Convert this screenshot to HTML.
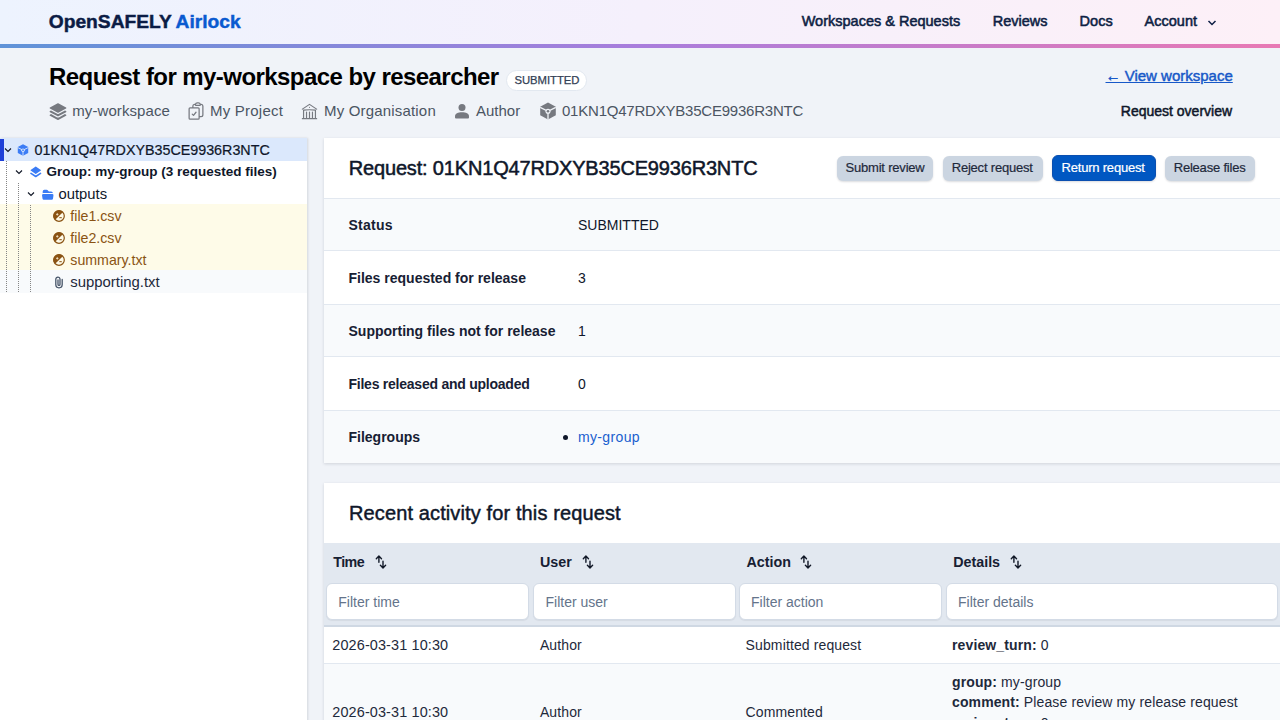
<!DOCTYPE html>
<html><head><meta charset="utf-8">
<style>
*{box-sizing:border-box;margin:0;padding:0}
html,body{width:1280px;height:720px;overflow:hidden}
body{position:relative;background:#f0f3f8;font-family:"Liberation Sans",sans-serif;color:#0f172a}
.a{position:absolute;white-space:nowrap;line-height:1}
#hdr{position:absolute;left:0;top:0;width:1280px;height:44px;background:linear-gradient(90deg,#edf3fe 0%,#f5f0fc 50%,#fdf0f7 100%)}
#hline{position:absolute;left:0;top:44px;width:1280px;height:4px;background:linear-gradient(90deg,#5f93d8 0%,#a97ddc 50%,#e879b4 100%)}
.nav{font-weight:400;font-size:14.5px;color:#0e1f44;-webkit-text-stroke:0.55px #0e1f44}
.meta{font-size:15px;color:#4b5563}
.ico{position:absolute}
#tree{position:absolute;left:0;top:138px;width:307px;height:600px;background:#fff;box-shadow:1px 0 2px rgba(15,23,42,.12)}
.trow{position:absolute;left:0;width:307px;height:22px}
.card{position:absolute;background:#fff;box-shadow:0 1px 3px rgba(15,23,42,.14)}
.lbl{font-weight:700;font-size:14px;color:#172033}
.val{font-size:14px;color:#0f172a}
.btn{position:absolute;height:25px;border-radius:6px;background:#cbd5e1;box-shadow:0 1px 2px rgba(15,23,42,.15)}
.btxt{font-size:13px;color:#1e293b;letter-spacing:-0.2px;-webkit-text-stroke:0.2px currentColor}
.inp{position:absolute;top:582.6px;height:37.2px;background:#fff;border:1px solid #d3dbe6;border-radius:6px;box-shadow:0 1px 1px rgba(15,23,42,.06)}
.ph{font-size:14px;color:#64748b}
.cell{font-size:14px;color:#1e293b;letter-spacing:0.12px}
</style></head><body>
<div id="hdr"></div><div id="hline"></div>
<!-- logo -->
<div class="a" style="left:48.8px;top:12.4px;font-size:19.2px;font-weight:700;color:#0b1c45;-webkit-text-stroke:0.45px #0b1c45">OpenSAFELY</div><div class="a" style="left:175.6px;top:12.4px;font-size:19.2px;font-weight:700;color:#0a5ad0;-webkit-text-stroke:0.45px #0a5ad0">Airlock</div>
<!-- nav -->
<div class="a nav" style="left:801.7px;top:14.3px">Workspaces &amp; Requests</div>
<div class="a nav" style="left:992.7px;top:14.3px">Reviews</div>
<div class="a nav" style="left:1079.6px;top:14.3px">Docs</div>
<div class="a nav" style="left:1144.6px;top:14.3px">Account</div>
<svg class="ico" style="left:1207px;top:19px" width="10" height="8" viewBox="0 0 10 8"><path d="M1.5 2 L5 5.5 L8.5 2" fill="none" stroke="#0e1f44" stroke-width="1.5"/></svg>

<!-- page header -->
<div class="a" style="left:49px;top:64.6px;font-size:24px;font-weight:700;color:#000;letter-spacing:-0.56px">Request for my-workspace by researcher</div>
<div class="a" style="left:505.6px;top:70.2px;width:81.8px;height:21.3px;border:1px solid #e2e8f0;border-radius:11px;background:#fff"></div>
<div class="a" style="left:514.5px;top:75px;font-size:11.3px;color:#334155;-webkit-text-stroke:0.25px #334155;letter-spacing:-0.05px">SUBMITTED</div>

<div class="a" style="left:1105.5px;top:68.4px;font-size:15px;color:#1758c8;text-decoration:underline;text-underline-offset:1px;-webkit-text-stroke:0.45px #1758c8">← View workspace</div>
<div class="a" style="left:1120.8px;top:103.8px;font-size:14px;color:#0f172a;-webkit-text-stroke:0.5px #0f172a">Request overview</div>

<!-- meta row -->
<div class="a meta" style="left:72.3px;top:102.8px;letter-spacing:0.08px">my-workspace</div>
<div class="a meta" style="left:210px;top:102.8px;letter-spacing:0.22px">My Project</div>
<div class="a meta" style="left:324px;top:102.8px;letter-spacing:0.18px">My Organisation</div>
<div class="a meta" style="left:476px;top:102.8px">Author</div>
<div class="a meta" style="left:562px;top:102.8px;letter-spacing:-0.22px">01KN1Q47RDXYB35CE9936R3NTC</div>

<!-- tree -->
<div id="tree">
 <div class="trow" style="top:0;height:22.6px;background:#dbe8fc"></div>
 <div class="a" style="left:0;top:0.5px;width:4px;height:22px;background:#1e40d8"></div>
 <div class="trow" style="top:66.3px;height:65.6px;background:#fefbe8"></div>
 <div class="trow" style="top:131.9px;height:23px;background:#f8fafc"></div>
 <div class="a" style="left:6px;top:23px;width:1px;height:132px;background:repeating-linear-gradient(180deg,#858585 0 1px,transparent 1px 2px)"></div>
 <div class="a" style="left:18px;top:45px;width:1px;height:110px;background:repeating-linear-gradient(180deg,#858585 0 1px,transparent 1px 2px)"></div>
 <div class="a" style="left:30px;top:67px;width:1px;height:88px;background:repeating-linear-gradient(180deg,#858585 0 1px,transparent 1px 2px)"></div>
</div>
<svg class="ico" style="left:3.5px;top:147px" width="8" height="6" viewBox="0 0 8 6"><path d="M1 1.5 L4 4.5 L7 1.5" fill="none" stroke="#111827" stroke-width="1.15"/></svg>
<svg class="ico" style="left:15.2px;top:169px" width="8" height="6" viewBox="0 0 8 6"><path d="M1 1.5 L4 4.5 L7 1.5" fill="none" stroke="#111827" stroke-width="1.15"/></svg>
<svg class="ico" style="left:27px;top:191px" width="8" height="6" viewBox="0 0 8 6"><path d="M1 1.5 L4 4.5 L7 1.5" fill="none" stroke="#111827" stroke-width="1.15"/></svg>
<div class="a" style="left:34.5px;top:142.5px;font-size:14.3px;color:#0f172a;-webkit-text-stroke:0.2px #0f172a">01KN1Q47RDXYB35CE9936R3NTC</div>
<div class="a" style="left:46.5px;top:164.5px;font-size:13.5px;font-weight:700;color:#0f172a">Group: my-group (3 requested files)</div>
<div class="a" style="left:58.5px;top:186.5px;font-size:14.8px;color:#0f172a">outputs</div>
<div class="a" style="left:70.3px;top:208.5px;font-size:14.2px;color:#8a5313">file1.csv</div>
<div class="a" style="left:70.3px;top:230.5px;font-size:14.2px;color:#8a5313">file2.csv</div>
<div class="a" style="left:70.3px;top:252.5px;font-size:14.2px;color:#8a5313">summary.txt</div>
<div class="a" style="left:70.3px;top:274.5px;font-size:14.9px;color:#1e293b">supporting.txt</div>

<!-- card 1 -->
<div class="card" style="left:324px;top:138px;width:970px;height:325px">
 <div class="a" style="left:0;top:60px;width:970px;height:53px;background:#f8fafc;border-top:1px solid #e2e8f0;border-bottom:1px solid #e2e8f0"></div>
 <div class="a" style="left:0;top:166px;width:970px;height:53px;background:#f8fafc;border-top:1px solid #e2e8f0;border-bottom:1px solid #e2e8f0"></div>
 <div class="a" style="left:0;top:272px;width:970px;height:53px;background:#f8fafc;border-top:1px solid #e2e8f0"></div>
</div>
<div class="a" style="left:348.75px;top:158px;font-size:20px;color:#0f172a;-webkit-text-stroke:0.5px #0f172a;letter-spacing:-0.17px">Request: 01KN1Q47RDXYB35CE9936R3NTC</div>
<div class="btn" style="left:836.5px;top:155.5px;width:96.5px"></div>
<div class="a btxt" style="left:845.5px;top:161px">Submit review</div>
<div class="btn" style="left:942.6px;top:155.5px;width:100.4px"></div>
<div class="a btxt" style="left:951.7px;top:161px">Reject request</div>
<div class="btn" style="left:1052px;top:155.2px;width:104px;height:25.8px;background:#0057c2;border:1px solid #0a4fb0"></div>
<div class="a btxt" style="left:1061.5px;top:161px;color:#fff">Return request</div>
<div class="btn" style="left:1164.6px;top:155.5px;width:90.6px"></div>
<div class="a btxt" style="left:1173.7px;top:161px">Release files</div>

<div class="a lbl" style="left:348.5px;top:217.9px;letter-spacing:0.25px">Status</div>
<div class="a val" style="left:578px;top:217.9px">SUBMITTED</div>
<div class="a lbl" style="left:348.5px;top:270.9px">Files requested for release</div>
<div class="a val" style="left:578px;top:270.9px">3</div>
<div class="a lbl" style="left:348.5px;top:323.9px">Supporting files not for release</div>
<div class="a val" style="left:578px;top:323.9px">1</div>
<div class="a lbl" style="left:348.5px;top:376.9px;letter-spacing:-0.24px">Files released and uploaded</div>
<div class="a val" style="left:578px;top:376.9px">0</div>
<div class="a lbl" style="left:348.5px;top:429.9px">Filegroups</div>
<div class="a" style="left:563px;top:435px;width:5px;height:5px;border-radius:50%;background:#0f172a"></div>
<div class="a val" style="left:578px;top:429.9px;color:#1a5fcf;letter-spacing:0.35px">my-group</div>

<!-- card 2 -->
<div class="card" style="left:324px;top:483px;width:970px;height:300px">
 <div class="a" style="left:0;top:60px;width:970px;height:84px;background:#e2e8f0;border-bottom:2px solid #cfd8e3"></div>
 <div class="a" style="left:0;top:180px;width:970px;height:120px;background:#f8fafc;border-top:1px solid #e2e8f0"></div>
</div>
<div class="a" style="left:349px;top:503px;font-size:20px;color:#0f172a;-webkit-text-stroke:0.45px #0f172a;letter-spacing:0.12px">Recent activity for this request</div>
<div class="a lbl" style="left:333.3px;top:554.6px;font-size:14.3px;letter-spacing:-0.6px">Time</div>
<div class="a lbl" style="left:540px;top:554.6px;font-size:14.3px">User</div>
<div class="a lbl" style="left:746.5px;top:554.6px;font-size:14.3px">Action</div>
<div class="a lbl" style="left:953.2px;top:554.6px;font-size:14.3px">Details</div>
<div class="inp" style="left:325.5px;width:203.5px"></div>
<div class="inp" style="left:532.5px;width:203px"></div>
<div class="inp" style="left:738.8px;width:203.5px"></div>
<div class="inp" style="left:945.6px;width:332.5px"></div>
<div class="a ph" style="left:338.3px;top:594.6px">Filter time</div>
<div class="a ph" style="left:545.5px;top:594.6px">Filter user</div>
<div class="a ph" style="left:751px;top:594.6px">Filter action</div>
<div class="a ph" style="left:958px;top:594.6px">Filter details</div>
<div class="a cell" style="left:332.3px;top:638px;font-size:14.45px">2026-03-31 10:30</div>
<div class="a cell" style="left:539.9px;top:638px">Author</div>
<div class="a cell" style="left:745.6px;top:638px">Submitted request</div>
<div class="a cell" style="left:952px;top:638px"><b>review_turn:</b> 0</div>
<div class="a cell" style="left:332.3px;top:704.7px;font-size:14.45px">2026-03-31 10:30</div>
<div class="a cell" style="left:539.9px;top:704.7px">Author</div>
<div class="a cell" style="left:745.6px;top:704.7px">Commented</div>
<div class="a cell" style="left:952px;top:675px"><b>group:</b> my-group</div>
<div class="a cell" style="left:952px;top:695.3px"><b>comment:</b> Please review my release request</div>
<div class="a cell" style="left:952px;top:716.2px"><b>review_turn:</b> 0</div>

<!-- meta icons -->
<svg class="ico" style="left:48px;top:102px" width="20" height="18" viewBox="0 0 24 22.5"><g fill="#767980"><path d="M11.644 1.59a.75.75 0 0 1 .712 0l9.75 5.25a.75.75 0 0 1 0 1.32l-9.75 5.25a.75.75 0 0 1-.712 0l-9.75-5.25a.75.75 0 0 1 0-1.32l9.75-5.25Z"/><path d="m3.265 10.602 7.668 4.129a2.25 2.25 0 0 0 2.134 0l7.668-4.13 1.37.739a.75.75 0 0 1 0 1.32l-9.75 5.25a.75.75 0 0 1-.71 0l-9.75-5.25a.75.75 0 0 1 0-1.32l1.37-.738Z"/><path d="m10.933 19.231-7.668-4.13-1.37.739a.75.75 0 0 0 0 1.32l9.75 5.25c.221.12.489.12.71 0l9.75-5.25a.75.75 0 0 0 0-1.32l-1.37-.738-7.668 4.13a2.25 2.25 0 0 1-2.134-.001Z"/></g></svg>
<svg class="ico" style="left:186px;top:101px" width="20" height="20" viewBox="0 0 24 24"><path fill="none" stroke="#767980" stroke-width="1.5" stroke-linecap="round" stroke-linejoin="round" d="M11.35 3.836c-.065.21-.1.433-.1.664 0 .414.336.75.75.75h4.5a.75.75 0 0 0 .75-.75 2.25 2.25 0 0 0-.1-.664m-5.8 0A2.251 2.251 0 0 1 13.5 2.25H15c1.012 0 1.867.668 2.15 1.586m-5.8 0c-.376.023-.75.05-1.124.08C9.095 4.01 8.25 4.973 8.25 6.108V8.25m8.9-4.414c.376.023.75.05 1.124.08 1.131.094 1.976 1.057 1.976 2.192V16.5A2.25 2.25 0 0 1 18 18.75h-2.25m-7.5-10.5H4.875c-.621 0-1.125.504-1.125 1.125v11.25c0 .621.504 1.125 1.125 1.125h9.75c.621 0 1.125-.504 1.125-1.125V18.75m-7.5-10.5h6.375c.621 0 1.125.504 1.125 1.125v9.375m-8.25-3 1.5 1.5 3-3.75"/></svg>
<svg class="ico" style="left:300px;top:102px" width="19" height="19" viewBox="0 0 24 24"><path fill="none" stroke="#767980" stroke-width="1.5" stroke-linecap="round" stroke-linejoin="round" d="M12 21v-8.25M15.75 21v-8.25M8.25 21v-8.25M3 9l9-6 9 6m-1.5 12V10.332A48.36 48.36 0 0 0 12 9.75c-2.551 0-5.056.2-7.5.582V21M3 21h18M12 6.75h.008v.008H12V6.75Z"/></svg>
<svg class="ico" style="left:454px;top:102px" width="16" height="18" viewBox="0 0 16 18"><circle cx="8" cy="5.6" r="3.5" fill="#767980"/><path fill="#767980" d="M1 14.2 C1 11.6 4 10.2 8 10.2 C12 10.2 15 11.6 15 14.2 V15.6 Q15 16.6 14 16.6 H2 Q1 16.6 1 15.6 Z"/></svg>
<svg class="ico" style="left:539px;top:102px" width="18" height="18" viewBox="0 0 12 12"><g><path fill="#767980" d="M6 0.3 L11.2 3.1 L11.2 8.9 L6 11.7 L0.8 8.9 L0.8 3.1 Z"/><path fill="none" stroke="#f0f3f8" stroke-width="0.9" d="M0.8 3.6 L6 6.2 L11.2 3.6 M6 6.2 L6 11.8"/><circle cx="6" cy="6.2" r="1.7" fill="#f0f3f8"/><circle cx="6" cy="6.2" r="0.85" fill="#767980"/></g></svg>

<!-- tree icons -->
<svg class="ico" style="left:17px;top:144px" width="12" height="12" viewBox="0 0 12 12"><g><path fill="#3b7cf5" d="M6 0.3 L11.2 3.1 L11.2 8.9 L6 11.7 L0.8 8.9 L0.8 3.1 Z"/><path fill="none" stroke="#dbe8fc" stroke-width="0.9" d="M0.8 3.6 L6 6.2 L11.2 3.6 M6 6.2 L6 11.8"/><circle cx="6" cy="6.2" r="1.7" fill="#dbe8fc"/><circle cx="6" cy="6.2" r="0.85" fill="#3b7cf5"/></g></svg>
<svg class="ico" style="left:29.5px;top:165.7px" width="12" height="12" viewBox="0 0 12 12"><path fill="#3b7cf5" d="M5.7 0.6 Q5.75 0.5 5.8 0.6 L10.9 4.1 Q11 4.25 10.9 4.4 L5.8 7.9 Q5.75 8 5.7 7.9 L0.6 4.4 Q0.5 4.25 0.6 4.1 Z"/><path fill="none" stroke="#3b7cf5" stroke-width="1.6" stroke-linejoin="round" stroke-linecap="round" d="M1 7.4 L5.75 10.5 L10.5 7.4"/></svg>
<svg class="ico" style="left:40.5px;top:187.5px" width="13.5" height="13" viewBox="0 0 24 23"><path fill="#3b7cf5" d="M19.906 9c.382 0 .749.057 1.094.162V9a3 3 0 0 0-3-3h-3.879a.75.75 0 0 1-.53-.22L11.47 3.66A2.25 2.25 0 0 0 9.879 3H6a3 3 0 0 0-3 3v3.162A3.756 3.756 0 0 1 4.094 9h15.812ZM4.094 10.5a2.25 2.25 0 0 0-2.227 2.568l.857 6A2.25 2.25 0 0 0 4.951 21H19.05a2.25 2.25 0 0 0 2.227-1.932l.857-6a2.25 2.25 0 0 0-2.227-2.568H4.094Z"/></svg>
<svg class="ico" style="left:53px;top:210px" width="12" height="12" viewBox="0 0 12 12"><circle cx="6" cy="6" r="5.3" fill="none" stroke="#8a5313" stroke-width="1.2"/><path d="M1.9 10.1 A5.8 5.8 0 0 1 10.1 1.9 Z" fill="#8a5313"/><path d="M3.2 4.4 H5.4 M4.3 3.3 V5.5" stroke="#f1e2c4" stroke-width="1"/><path d="M6.3 7.7 H8.8" stroke="#8a5313" stroke-width="1"/></svg>
<svg class="ico" style="left:53px;top:232px" width="12" height="12" viewBox="0 0 12 12"><circle cx="6" cy="6" r="5.3" fill="none" stroke="#8a5313" stroke-width="1.2"/><path d="M1.9 10.1 A5.8 5.8 0 0 1 10.1 1.9 Z" fill="#8a5313"/><path d="M3.2 4.4 H5.4 M4.3 3.3 V5.5" stroke="#f1e2c4" stroke-width="1"/><path d="M6.3 7.7 H8.8" stroke="#8a5313" stroke-width="1"/></svg>
<svg class="ico" style="left:53px;top:254px" width="12" height="12" viewBox="0 0 12 12"><circle cx="6" cy="6" r="5.3" fill="none" stroke="#8a5313" stroke-width="1.2"/><path d="M1.9 10.1 A5.8 5.8 0 0 1 10.1 1.9 Z" fill="#8a5313"/><path d="M3.2 4.4 H5.4 M4.3 3.3 V5.5" stroke="#f1e2c4" stroke-width="1"/><path d="M6.3 7.7 H8.8" stroke="#8a5313" stroke-width="1"/></svg>
<svg class="ico" style="left:54px;top:276px" width="10" height="13" viewBox="0 0 10 13"><path fill="none" stroke="#475569" stroke-width="1.3" stroke-linecap="round" d="M8.2 3.5 V8.6 A3.2 3.2 0 0 1 1.8 8.6 V3.2 A2.1 2.1 0 0 1 6 3.2 V8.4 A1 1 0 0 1 4 8.4 V4"/></svg>
<!-- sort icons -->
<svg class="ico" style="left:375px;top:555px" width="12" height="14" viewBox="0 0 12 14"><path fill="none" stroke="#111827" stroke-width="1.4" stroke-linecap="round" stroke-linejoin="round" d="M3.9 1.3 V7.3 M1.3 3.7 L3.9 1.1 L6.5 3.7 M8 6.3 V12.7 M5.4 10.3 L8 12.9 L10.6 10.3"/></svg>
<svg class="ico" style="left:581.5px;top:555px" width="12" height="14" viewBox="0 0 12 14"><path fill="none" stroke="#111827" stroke-width="1.4" stroke-linecap="round" stroke-linejoin="round" d="M3.9 1.3 V7.3 M1.3 3.7 L3.9 1.1 L6.5 3.7 M8 6.3 V12.7 M5.4 10.3 L8 12.9 L10.6 10.3"/></svg>
<svg class="ico" style="left:800px;top:555px" width="12" height="14" viewBox="0 0 12 14"><path fill="none" stroke="#111827" stroke-width="1.4" stroke-linecap="round" stroke-linejoin="round" d="M3.9 1.3 V7.3 M1.3 3.7 L3.9 1.1 L6.5 3.7 M8 6.3 V12.7 M5.4 10.3 L8 12.9 L10.6 10.3"/></svg>
<svg class="ico" style="left:1010px;top:555px" width="12" height="14" viewBox="0 0 12 14"><path fill="none" stroke="#111827" stroke-width="1.4" stroke-linecap="round" stroke-linejoin="round" d="M3.9 1.3 V7.3 M1.3 3.7 L3.9 1.1 L6.5 3.7 M8 6.3 V12.7 M5.4 10.3 L8 12.9 L10.6 10.3"/></svg>
</body></html>
